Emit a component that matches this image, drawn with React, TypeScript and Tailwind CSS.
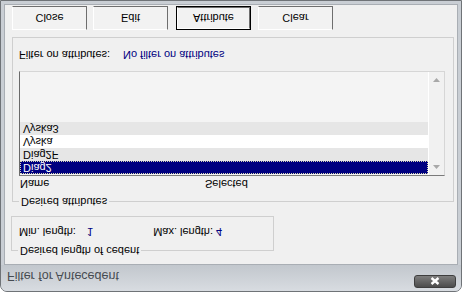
import React from "react";

const rows = [
  { name: "Diag2", cls: "bg-[#000080] text-white border border-dotted border-[#d8d8b0]" },
  { name: "Diag2F", cls: "bg-[#e6e6e6] border border-transparent" },
  { name: "Vyska", cls: "bg-white border border-transparent" },
  { name: "Vyska3", cls: "bg-[#e6e6e6] border border-transparent" },
];

function Btn({ label, className, focused }: { label: string; className: string; focused?: boolean }) {
  return (
    <div className={`${className} h-[24px] w-[75px] ${focused ? "border border-black" : ""}`}>
      <div className="flex h-full w-full items-center justify-center border border-t-white border-l-white border-r-[#6e6e6e] border-b-[#6e6e6e] bg-[#f2f2f2]">
        {label}
      </div>
    </div>
  );
}

function GroupLabel({ text }: { text: string }) {
  // legend sitting on the group box border
  return (
    <span className="absolute -top-[8px] left-[6px] bg-[#f0f0f0] px-[2px] leading-[14px]">{text}</span>
  );
}

export default function App() {
  return (
    <div
      className="flex h-[292px] w-[462px] -scale-y-100 flex-col overflow-hidden rounded-t-[7px] border border-[#6f7377] bg-[#c9ced4] text-[11px] leading-[14px] text-black"
      style={{ fontFamily: '"Liberation Sans", Arial, sans-serif' }}
    >
      {/* title bar */}
      <div className="flex h-[26px] shrink-0 items-start bg-gradient-to-b from-[#d8dce1] to-[#c2c7cd] pl-[6px] pr-[5px]">
        <span className="mt-[7px] text-[12.5px] leading-[16px] text-[#464b51]">Filter for Antecedent</span>
        <div className="mt-[3px] ml-auto flex h-[13px] w-[42px] items-center justify-center rounded-[3px] border border-[#3e3e3e] bg-gradient-to-b from-[#4c4c4c] to-[#7e7e7e]">
          <svg width="10" height="8" viewBox="0 0 10 8">
            <path d="M1.5 1 L8.5 7 M8.5 1 L1.5 7" stroke="white" strokeWidth="2.4" />
          </svg>
        </div>
      </div>

      {/* client area */}
      <div className="mx-[3px] mb-[3px] flex flex-1 flex-col border border-[#a9aeb4] bg-[#f0f0f0]">
        {/* Desired length of cedent */}
        <div className="relative mt-[13px] ml-[6px] h-[35px] w-[263px] shrink-0 border border-[#cfcfcf]">
          <GroupLabel text="Desired length of cedent" />
          <div className="mt-[11px] flex">
            <span className="ml-[7px] w-[68px]">Min. length:</span>
            <span className="text-[#000080]">1</span>
            <span className="ml-[60px]">Max. length:</span>
            <span className="ml-[3px] text-[#000080]">4</span>
          </div>
        </div>

        {/* Desired attributes */}
        <div className="relative mt-[14px] ml-[7px] flex h-[165px] w-[442px] shrink-0 flex-col border border-[#cfcfcf]">
          <GroupLabel text="Desired attributes" />
          <div className="mt-[10px] flex h-[14px]">
            <span className="ml-[7px] w-[185px]">Name</span>
            <span>Selected</span>
          </div>
          <div className="mt-[1px] ml-[6px] flex h-[105px] w-[426px] border border-t-[#7a7a7a] border-l-[#6a6a6a] border-r-[#d6d6d6] border-b-[#d6d6d6] bg-[#f4f4f4]">
            <div className="flex flex-1 flex-col pt-[1px]">
              {rows.map((r) => (
                <div key={r.name} className={`h-[13px] pl-[2px] leading-[11px] ${r.cls}`}>
                  {r.name}
                </div>
              ))}
            </div>
            <div className="flex w-[16px] flex-col items-center justify-between border-l border-white bg-[#f1f1f1] py-[6px]">
              <svg width="7" height="4" viewBox="0 0 7 4">
                <path d="M0 4 L3.5 0 L7 4 Z" fill="#a8a8a8" />
              </svg>
              <svg width="7" height="4" viewBox="0 0 7 4">
                <path d="M0 0 L3.5 4 L7 0 Z" fill="#a8a8a8" />
              </svg>
            </div>
          </div>
          <div className="mt-[9px] flex">
            <span className="ml-[6px] w-[104px]">Filter on attributes:</span>
            <span className="text-[#000080]">No filter on attributes</span>
          </div>
        </div>

        {/* buttons */}
        <div className="mt-[7px] flex">
          <Btn label="Close" className="ml-[7px]" />
          <Btn label="Edit" className="ml-[6px]" />
          <Btn label="Attribute" className="ml-[8px]" focused />
          <Btn label="Clear" className="ml-[7px]" />
        </div>
      </div>
    </div>
  );
}
